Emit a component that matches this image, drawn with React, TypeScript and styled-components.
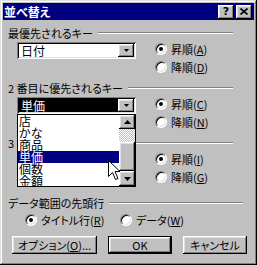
import React from 'react';
import styled, { createGlobalStyle, css } from 'styled-components';

const FONT = `"Noto Sans CJK JP", "Noto Sans", sans-serif`;

const GlobalStyle = createGlobalStyle`
  html, body { margin: 0; padding: 0; background: #c0c0c0; }
  body { font-family: ${FONT}; font-size: 11px; }
`;

const raised = css`
  background: #c0c0c0;
  box-shadow: inset -1px -1px #000, inset 1px 1px #fff, inset -2px -2px #808080, inset 2px 2px #dfdfdf;
`;

const sunken = css`
  box-shadow: inset 1px 1px #808080, inset -1px -1px #fff, inset 2px 2px #000, inset -2px -2px #dfdfdf;
`;

const Window = styled.div`
  position: relative;
  box-sizing: border-box;
  width: 257px;
  height: 265px;
  padding: 3px;
  background: #c0c0c0;
  box-shadow: inset -1px -1px #000, inset 1px 1px #dfdfdf, inset -2px -2px #808080, inset 2px 2px #fff;
  font-family: ${FONT};
  font-size: 11px;
  font-feature-settings: "palt";
  color: #000;
  display: flex;
  flex-direction: column;
  overflow: hidden;
`;

const TitleBar = styled.div`
  height: 17px;
  background: #000080;
  display: flex;
  align-items: center;
  padding: 0 2px 0 1px;
`;

const TitleText = styled.div`
  flex: 1;
  color: #fff;
  font-weight: bold;
  font-size: 12px;
  line-height: 17px;
  white-space: nowrap;
`;

const TitleButton = styled.div`
  ${raised};
  width: 16px;
  height: 14px;
  margin-left: 2px;
  display: flex;
  align-items: center;
  justify-content: center;
  font-family: "DejaVu Sans", "Liberation Sans", sans-serif;
  font-weight: bold;
  font-size: 11px;
  line-height: 14px;
`;

const Content = styled.div`
  padding: 6px 0 0 5px;
  display: flex;
  flex-direction: column;
`;

const Group = styled.div<{ $top: number }>`
  margin-top: ${p => p.$top}px;
  display: flex;
  flex-direction: column;
`;

const GroupHeader = styled.div<{ $end: number }>`
  height: 14px;
  display: flex;
  align-items: center;
  margin-right: ${p => p.$end}px;
`;

const GroupLabel = styled.span`
  white-space: nowrap;
  line-height: 14px;
  padding-right: 5px;
`;

const Rule = styled.div`
  flex: 1;
  height: 0;
  border-top: 1px solid #808080;
  border-bottom: 1px solid #fff;
`;

const GroupBody = styled.div`
  height: 36px;
  display: flex;
  padding-left: 9px;
`;

const ComboBox = styled.div<{ $focused?: boolean }>`
  position: relative;
  box-sizing: border-box;
  width: 119px;
  height: 17px;
  margin-top: 2px;
  padding: 2px;
  display: flex;
  background: ${p => (p.$focused ? '#000' : '#fff')};
  ${sunken};
`;

const ComboText = styled.div<{ $focused?: boolean }>`
  flex: 1;
  padding-left: 2px;
  font-size: 12px;
  line-height: 13px;
  color: ${p => (p.$focused ? '#fff' : '#000')};
  white-space: nowrap;
`;

const ArrowButton = styled.div<{ $w: number; $h: number }>`
  ${raised};
  width: ${p => p.$w}px;
  height: ${p => p.$h}px;
  flex: none;
  display: flex;
  align-items: center;
  justify-content: center;
`;

const RadioColumn = styled.div`
  margin-left: 19px;
  display: flex;
  flex-direction: column;
`;

const RadioRow = styled.label`
  height: 18px;
  display: flex;
  align-items: center;
  gap: 4px;
  white-space: nowrap;
`;

const RadioCircle = styled.span<{ $checked?: boolean }>`
  position: relative;
  box-sizing: border-box;
  width: 12px;
  height: 12px;
  border-radius: 50%;
  background: #fff;
  border: 1px solid;
  border-color: #808080 #fff #fff #808080;
  box-shadow: inset 1px 1px #000, inset -1px -1px #dfdfdf;
  flex: none;
  &::after {
    content: '';
    display: ${p => (p.$checked ? 'block' : 'none')};
    position: absolute;
    left: 3px;
    top: 3px;
    width: 4px;
    height: 4px;
    border-radius: 50%;
    background: #000;
  }
`;

const RadioText = styled.span`
  line-height: 14px;
`;

const DataRow = styled.div`
  margin-top: 1px;
  padding-left: 17px;
  display: grid;
  grid-template-columns: 95px auto;
  justify-content: start;
`;

const ButtonRow = styled.div`
  margin-top: 7px;
  padding-left: 4px;
  display: flex;
  gap: 11px;
`;

const PushButton = styled.div<{ $w: number; $default?: boolean }>`
  ${raised};
  box-sizing: border-box;
  width: ${p => p.$w}px;
  height: 18px;
  display: flex;
  align-items: center;
  justify-content: center;
  line-height: 14px;
  white-space: nowrap;
  ${p =>
    p.$default &&
    css`
      border: 1px solid #000;
    `}
`;

const DropList = styled.div`
  position: absolute;
  left: 0;
  top: 100%;
  z-index: 2;
  box-sizing: border-box;
  width: 119px;
  height: 73px;
  border: 1px solid #000;
  background: #fff;
  display: flex;
`;

const ListItems = styled.div`
  flex: 1;
  display: flex;
  flex-direction: column;
`;

const ListItem = styled.div<{ $selected?: boolean }>`
  height: 12px;
  line-height: 12px;
  font-size: 12px;
  padding-left: 1px;
  white-space: nowrap;
  background: ${p => (p.$selected ? '#000080' : 'transparent')};
  color: ${p => (p.$selected ? '#fff' : '#000')};
`;

const ScrollBar = styled.div`
  width: 16px;
  display: flex;
  flex-direction: column;
`;

const ScrollTrack = styled.div<{ $h: number }>`
  height: ${p => p.$h}px;
  background-image: repeating-conic-gradient(#c0c0c0 0% 25%, #fff 0% 50%);
  background-size: 2px 2px;
`;

const ScrollThumb = styled.div<{ $h: number }>`
  ${raised};
  height: ${p => p.$h}px;
`;

const Cursor = styled.svg`
  position: absolute;
  left: 108px;
  top: 160px;
  z-index: 3;
`;

const Down = ({ w, h }: { w: number; h: number }) => (
  <svg width={w} height={h} viewBox={`0 0 ${w} ${h}`}>
    <polygon points={`0,0 ${w},0 ${w / 2},${h}`} fill="#000" />
  </svg>
);

const Up = ({ w, h }: { w: number; h: number }) => (
  <svg width={w} height={h} viewBox={`0 0 ${w} ${h}`}>
    <polygon points={`0,${h} ${w},${h} ${w / 2},0`} fill="#000" />
  </svg>
);

const Radio = ({ checked, label, k }: { checked?: boolean; label: string; k: string }) => (
  <RadioRow>
    <RadioCircle $checked={checked} />
    <RadioText>
      {label}(<u>{k}</u>)
    </RadioText>
  </RadioRow>
);

const items = ['店', 'かな', '商品', '単価', '個数', '金額'];

export default function App() {
  return (
    <>
      <GlobalStyle />
      <Window>
        <TitleBar>
          <TitleText>並べ替え</TitleText>
          <TitleButton>?</TitleButton>
          <TitleButton>
            <svg width="8" height="7" viewBox="0 0 8 7">
              <path d="M0.5 0.5 L7.5 6.5 M7.5 0.5 L0.5 6.5" stroke="#000" strokeWidth="1.6" />
            </svg>
          </TitleButton>
        </TitleBar>
        <Content>
          <Group $top={0}>
            <GroupHeader $end={21}>
              <GroupLabel>最優先されるキー</GroupLabel>
              <Rule />
            </GroupHeader>
            <GroupBody>
              <ComboBox>
                <ComboText>日付</ComboText>
                <ArrowButton $w={16} $h={13}>
                  <Down w={5} h={3} />
                </ArrowButton>
              </ComboBox>
              <RadioColumn>
                <Radio checked label="昇順" k="A" />
                <Radio label="降順" k="D" />
              </RadioColumn>
            </GroupBody>
          </Group>

          <Group $top={5}>
            <GroupHeader $end={21}>
              <GroupLabel>2 番目に優先されるキー</GroupLabel>
              <Rule />
            </GroupHeader>
            <GroupBody>
              <ComboBox $focused>
                <ComboText $focused>単価</ComboText>
                <ArrowButton $w={16} $h={13}>
                  <Down w={5} h={3} />
                </ArrowButton>
                <DropList>
                  <ListItems>
                    {items.map(it => (
                      <ListItem key={it} $selected={it === '単価'}>
                        {it}
                      </ListItem>
                    ))}
                  </ListItems>
                  <ScrollBar>
                    <ArrowButton $w={16} $h={14}>
                      <Up w={7} h={4} />
                    </ArrowButton>
                    <ScrollTrack $h={13} />
                    <ScrollThumb $h={29} />
                    <ArrowButton $w={16} $h={15}>
                      <Down w={7} h={4} />
                    </ArrowButton>
                  </ScrollBar>
                </DropList>
              </ComboBox>
              <RadioColumn>
                <Radio checked label="昇順" k="C" />
                <Radio label="降順" k="N" />
              </RadioColumn>
            </GroupBody>
          </Group>

          <Group $top={5}>
            <GroupHeader $end={21}>
              <GroupLabel>3 番目に優先されるキー</GroupLabel>
              <Rule />
            </GroupHeader>
            <GroupBody>
              <ComboBox>
                <ComboText />
                <ArrowButton $w={16} $h={13}>
                  <Down w={5} h={3} />
                </ArrowButton>
              </ComboBox>
              <RadioColumn>
                <Radio checked label="昇順" k="I" />
                <Radio label="降順" k="G" />
              </RadioColumn>
            </GroupBody>
          </Group>

          <Group $top={10}>
            <GroupHeader $end={11}>
              <GroupLabel>データ範囲の先頭行</GroupLabel>
              <Rule />
            </GroupHeader>
            <DataRow>
              <Radio checked label="タイトル行" k="R" />
              <Radio label="データ" k="W" />
            </DataRow>
          </Group>

          <ButtonRow>
            <PushButton $w={85}>
              オプション(<u>O</u>)...
            </PushButton>
            <PushButton $w={64} $default>
              OK
            </PushButton>
            <PushButton $w={64}>キャンセル</PushButton>
          </ButtonRow>
        </Content>
        <Cursor width="13" height="21" viewBox="0 0 13 21">
          <polygon
            points="0.5,0.5 0.5,16.5 4.5,12.5 7.5,19.5 10,18.5 7,11.5 12,11.5"
            fill="#fff"
            stroke="#000"
            strokeWidth="1"
          />
        </Cursor>
      </Window>
    </>
  );
}
